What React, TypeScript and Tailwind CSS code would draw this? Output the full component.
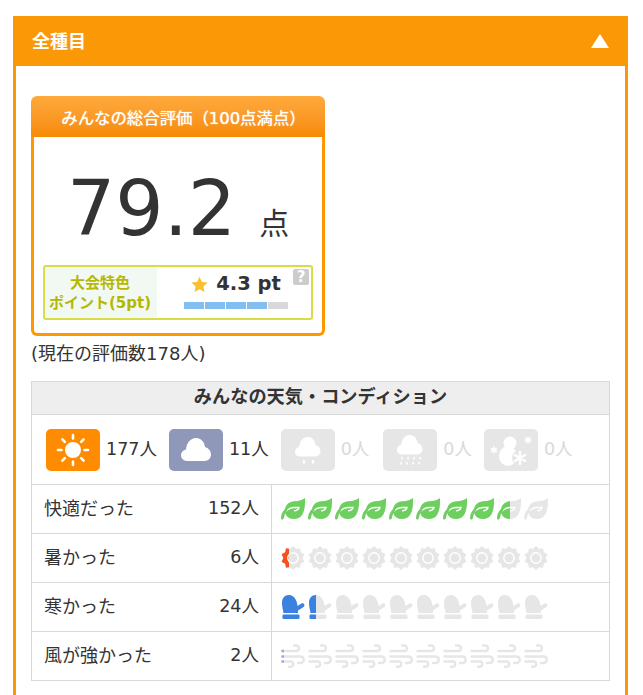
import React from 'react';

const TOTAL = 178;

const jpFont = "font-['DejaVu_Sans','Noto_Sans_CJK_JP',sans-serif]";

const sunPoints = (() => {
    const pts: string[] = [];
    for (let i = 0; i < 20; i++) {
        const r = i % 2 === 0 ? 12 : 9.6;
        const a = (Math.PI * i) / 10 - Math.PI / 2;
        pts.push(`${(12 + r * Math.cos(a)).toFixed(2)},${(12 + r * Math.sin(a)).toFixed(2)}`);
    }
    return pts.join(' ');
})();

// rating glyphs, all in a 24x24 box
const Leaf = ({ color }: { color: string }) => (
    <svg viewBox="0 0 24 24" className="w-6 h-6 block">
        <path fill={color} d="M24 1C22 3 18 4 14 4.2C8 4.5 4.5 8 4 12.5C3.7 17 6 22 13 22C21 22 24.5 15 24 1Z" />
        <path fill="none" stroke="#fff" strokeWidth="1.3" d="M5 14.5C7.5 11.5 10 10.5 13 10.5H18C17.5 12.5 16 13.8 13 13.8" />
        <path fill="none" stroke={color} strokeWidth="2.8" strokeLinecap="round" d="M1.4 21C1.6 17.5 3 15 5 13" />
    </svg>
);

const Sun = ({ color }: { color: string }) => (
    <svg viewBox="0 0 24 24" className="w-6 h-6 block">
        <polygon fill={color} points={sunPoints} />
        <circle cx="12" cy="12" r="5.2" fill="none" stroke="#fff" strokeWidth="1.4" />
    </svg>
);

const Mitten = ({ color }: { color: string }) => (
    <svg viewBox="0 0 24 24" className="w-6 h-6 block">
        <path fill={color} d="M8 0C3.5 0 1 3.5 1 8C1 11 2 15 2.5 18H17V15.5L22.5 12C24.5 10.5 23 7.5 20.5 8.5L16.5 11C16 5 13 0 8 0Z" />
        <rect x="1.5" y="19.5" width="17" height="4.5" rx="1.2" fill={color} />
    </svg>
);

const Wind = ({ color }: { color: string }) => (
    <svg viewBox="0 0 24 24" className="w-6 h-6 block" fill="none" stroke={color} strokeWidth="2.4" strokeLinecap="round">
        <path d="M1.5 7H15C19 7 19 1.5 15 1.5H13" />
        <path d="M1.5 12.5H19C24 12.5 24 19 19 19H17" />
        <path d="M1.5 17.5H10C13 17.5 13 22.8 9.5 22.8H8" />
    </svg>
);

const RatingRow = ({ label, count, color, Icon }: {
    label: string;
    count: number;
    color: string;
    Icon: React.ComponentType<{ color: string }>;
}) => {
    const score = (count / TOTAL) * 10;
    return (
        <div className="flex h-[49px] border-t border-[#d9d9d9]">
            <div className="w-[240px] shrink-0 flex items-center justify-between pl-3 pr-3 pb-[2px] border-r border-[#d9d9d9] text-[#333]">
                <span className="text-[18px]">{label}</span>
                <span className="text-[17.5px]">{count}人</span>
            </div>
            <div className="flex items-center gap-[3px] pl-[9px]">
                {Array.from({ length: 10 }).map((_, i) => {
                    const part = Math.max(0, Math.min(1, score - i));
                    return (
                        <div key={i} className="relative w-6 h-6">
                            <Icon color="#e6e6e6" />
                            <div className="absolute top-0 left-0 h-6 overflow-hidden" style={{ width: `${part * 24}px` }}>
                                <Icon color={color} />
                            </div>
                        </div>
                    );
                })}
            </div>
        </div>
    );
};

const CLOUD = 'M6 23C2.7 23 0 20.5 0 17.3C0 14.2 2.5 12 5 11.5C5.5 5 9.5 0 15 0C20 0 23.5 4 24 9C27.5 10 30 13 30 16.5C30 20.2 27 23 23.5 23Z';

const WeatherTile = ({ bg, count, className, children }: { bg: string; count: number; className?: string; children: React.ReactNode }) => (
    <div className={`flex items-center gap-[6px] ${className ?? ''}`}>
        <div className={`w-[54px] h-[42px] rounded-[5px] ${bg}`}>
            <svg width="54" height="42" viewBox="0 0 54 42" className="block">{children}</svg>
        </div>
        <span className={`text-[17.5px] ${count === 0 ? 'text-[#d9d9d9]' : 'text-[#333]'}`}>{count}人</span>
    </div>
);

const App = () => {
    return (
        <div className={`w-[643px] h-[695px] overflow-hidden bg-white pt-4 pl-[13px] ${jpFont}`}>
            <div className="w-[615px]">
                <div className="h-[50px] bg-[#fb9806] flex items-center justify-between pl-[19px] pr-[19px]">
                    <span className="text-white font-bold text-[18px]">全種目</span>
                    <svg width="18" height="14" viewBox="0 0 18 14"><path fill="#fff" d="M9 0L18 14H0Z" /></svg>
                </div>

                <div className="border-x-[3px] border-[#fb9806] pt-[30px] px-[15px] pb-[15px]">
                    {/* overall score card */}
                    <div className="w-[294px] h-[240px] flex flex-col">
                        <div className="h-[41px] pl-[11px] pt-[5px] rounded-t-[6px] bg-gradient-to-b from-[#ffaa3c] to-[#f68a00] flex items-center justify-center text-white text-[16.4px] [text-shadow:0_0_1px_#fff]">
                            みんなの総合評価（100点満点）
                        </div>
                        <div className="flex-1 border-x-[3px] border-b-[3px] border-[#ff9800] rounded-b-[6px] px-[9px] flex flex-col">
                            <div className="h-[128px] flex items-end text-[#333] pb-[18px]">
                                <span className="text-[76px] leading-none ml-[24px]">79.2</span>
                                <span className="text-[30px] leading-none ml-[23px] mb-[8px]">点</span>
                            </div>
                            <div className="relative h-[55px] border-2 border-[#d6dd45] rounded-[3px] flex">
                                <div className="w-[112px] pr-[2px] bg-[#f1f9f2] flex flex-col items-center justify-center text-[15px] leading-[20px] font-bold text-[#b5b800]">
                                    <span>大会特色</span>
                                    <span>ポイント(5pt)</span>
                                </div>
                                <div className="flex-1 flex flex-col items-center pt-[2px] pl-[4px]">
                                    <div className="flex items-center gap-[8px] h-[30px]">
                                        <svg width="17" height="17" viewBox="0 0 24 24"><path fill="#fbc02d" d="M12 1L15.4 8.3L23.4 9.3L17.5 14.8L19 22.7L12 18.8L5 22.7L6.5 14.8L0.6 9.3L8.6 8.3Z" /></svg>
                                        <span className="text-[19.5px] font-bold text-[#333]">4.3 pt</span>
                                    </div>
                                    <div className="flex gap-[1px] mt-[3px]">
                                        <div className="w-5 h-[7px] bg-[#82bef0]" />
                                        <div className="w-5 h-[7px] bg-[#82bef0]" />
                                        <div className="w-5 h-[7px] bg-[#82bef0]" />
                                        <div className="w-5 h-[7px] bg-[#82bef0]" />
                                        <div className="w-5 h-[7px] bg-[#d9d9d9]" />
                                    </div>
                                </div>
                                <div className="absolute top-[2px] right-[2px] w-4 h-4 rounded-[2px] bg-[#cccccc] flex items-center justify-center text-white text-[15px] font-bold leading-none">?</div>
                            </div>
                        </div>
                    </div>

                    <p className="text-[18px] text-[#333] mt-[6px] h-[39px] leading-[24px]">(現在の評価数178人)</p>

                    {/* weather and condition table */}
                    <div className="w-[579px] border border-[#d9d9d9]">
                        <div className="h-[32px] pb-[3px] bg-[#eeeeee] flex items-center justify-center font-bold text-[18.2px] text-[#333]">
                            みんなの天気・コンディション
                        </div>
                        <div className="h-[70px] border-t border-[#d9d9d9] flex items-center gap-3 pl-[14px]">
                            <WeatherTile bg="bg-[#ff8c00]" count={177}>
                                <circle cx="27" cy="21" r="8" fill="#fff" />
                                <path stroke="#fff" strokeWidth="2.6" strokeLinecap="round" d="M27 6V9.5M27 32.5V36M12 21H15.5M38.5 21H42M16.4 10.4L18.8 12.8M35.2 29.2L37.6 31.6M16.4 31.6L18.8 29.2M35.2 12.8L37.6 10.4" />
                            </WeatherTile>
                            <WeatherTile bg="bg-[#8f98b8]" count={11}>
                                <path fill="#fff" transform="translate(12 9)" d={CLOUD} />
                            </WeatherTile>
                            <WeatherTile bg="bg-[#e6e6e6]" count={0}>
                                <path fill="#fff" transform="translate(14 8) scale(0.85)" d={CLOUD} />
                                <path stroke="#fff" strokeWidth="2.4" strokeLinecap="round" d="M23 32V33.5M32 32V33.5" />
                            </WeatherTile>
                            <WeatherTile bg="bg-[#e6e6e6]" count={0} className="ml-[2px]">
                                <path fill="#fff" transform="translate(14 6) scale(0.85)" d={CLOUD} />
                                <path stroke="#fff" strokeWidth="1.6" strokeLinecap="round" d="M19 28.5V30M25 28.5V30M31 28.5V30M37 28.5V30M18 33.5V35M24 33.5V35M30 33.5V35M36 33.5V35" />
                            </WeatherTile>
                            <WeatherTile bg="bg-[#e6e6e6]" count={0}>
                                <circle cx="26" cy="14" r="6.5" fill="#fff" />
                                <ellipse cx="24" cy="27" rx="9" ry="10" fill="#fff" />
                                <circle cx="36" cy="29" r="8" fill="#e6e6e6" />
                                <path stroke="#fff" strokeWidth="2.4" strokeLinecap="round" d="M36 23V35M30.8 26L41.2 32M30.8 32L41.2 26" />
                                <path stroke="#fff" strokeWidth="1.5" strokeLinecap="round" d="M10 18V24M7.4 19.5L12.6 22.5M7.4 22.5L12.6 19.5M44 8V14M41.4 9.5L46.6 12.5M41.4 12.5L46.6 9.5" />
                            </WeatherTile>
                        </div>
                        <RatingRow label="快適だった" count={152} color="#6ccf5e" Icon={Leaf} />
                        <RatingRow label="暑かった" count={6} color="#f4511e" Icon={Sun} />
                        <RatingRow label="寒かった" count={24} color="#3b82e0" Icon={Mitten} />
                        <RatingRow label="風が強かった" count={2} color="#b999e6" Icon={Wind} />
                    </div>
                </div>
            </div>
        </div>
    );
};

export default App;
